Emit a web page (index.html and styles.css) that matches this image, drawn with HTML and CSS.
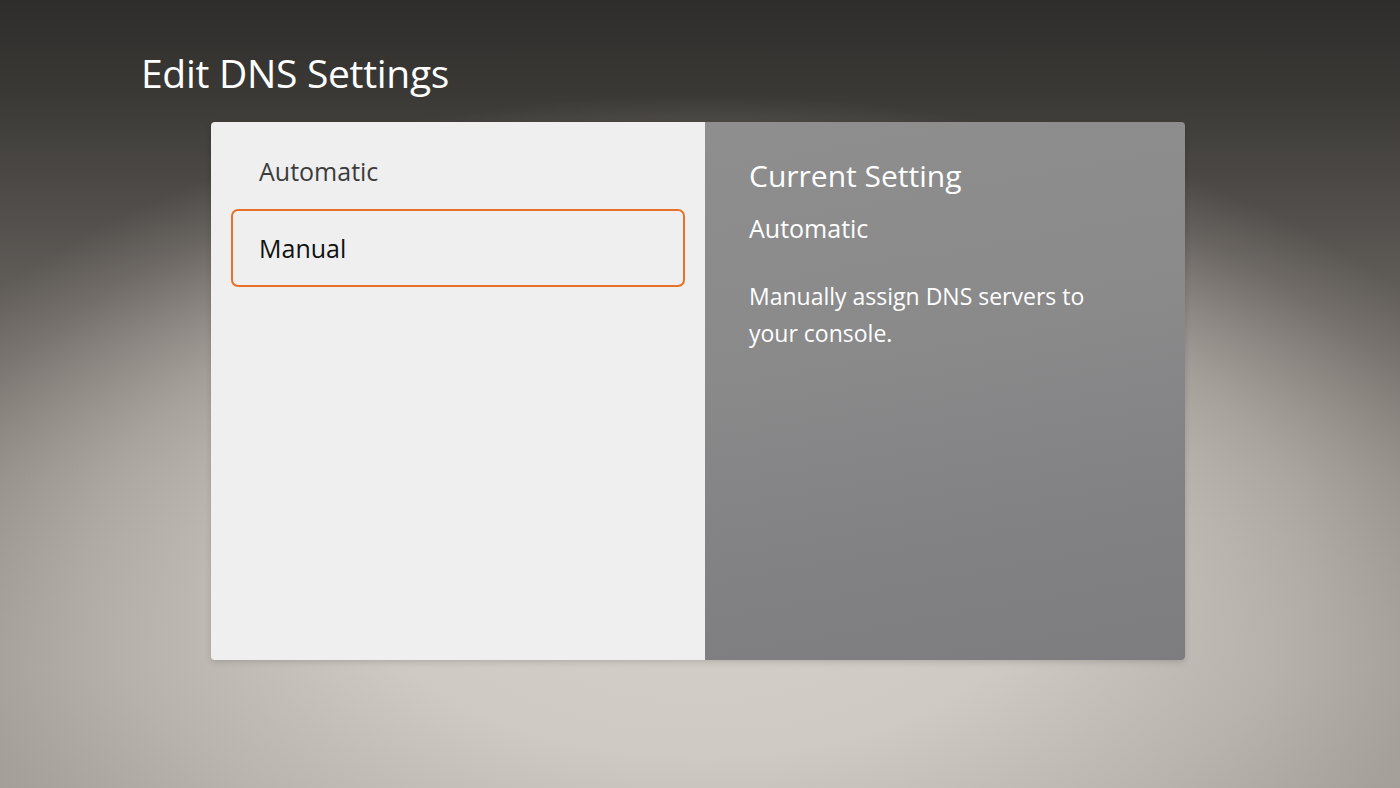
FILE: index.html
```html
<!DOCTYPE html>
<html lang="en">
<head>
    <meta charset="UTF-8">
    <meta name="viewport" content="width=device-width, initial-scale=1.0">
    <title>Edit DNS Settings</title>
    <link rel="stylesheet" href="styles.css">
</head>
<body>

    <div class="screen">
        <h1 class="page-title">Edit DNS Settings</h1>

        <div class="dns-panel">
            <div class="option-list">
                <div class="option">Automatic</div>
                <div class="option selected">Manual</div>
            </div>

            <div class="detail-pane">
                <h2>Current Setting</h2>
                <div class="current-value">Automatic</div>
                <p class="description">Manually assign DNS servers to<br>your console.</p>
            </div>
        </div>
    </div>

</body>
</html>
```

FILE: styles.css
```css
/* Dark top fading into a soft warm glow */
body {
    margin: 0;
    padding: 0;
    width: 1400px;
    height: 788px;
    overflow: hidden;
    font-family: "Open Sans", "Noto Sans", sans-serif;
    background:
        radial-gradient(ellipse 62% 60% at 50% 72%, rgba(214, 208, 202, 1) 0%, rgba(210, 204, 198, 0.95) 40%, rgba(206, 200, 194, 0.55) 70%, rgba(200, 194, 188, 0.15) 90%, rgba(200, 194, 188, 0) 100%),
        linear-gradient(180deg, #2e2d2b 0%, #3b3936 12%, #5e5a56 35%, #827d77 60%, #9a958f 85%, #a09b95 100%);
}

.screen {
    padding: 48px 0 0 141px;
}

.page-title {
    margin: 0 0 24px 0;
    color: #fff;
    font-weight: 400;
    font-size: 39px;
    line-height: 50px;
    letter-spacing: -0.3px;
}

.dns-panel {
    display: flex;
    width: 974px;
    height: 538px;
    margin-left: 70px;
    border-radius: 4px;
    overflow: hidden;
    box-shadow: 0 2px 6px rgba(0, 0, 0, 0.15);
}

.option-list {
    width: 494px;
    background-color: #efefef;
    padding: 11px 20px 0 20px;
    box-sizing: border-box;
}

.option {
    height: 76px;
    box-sizing: border-box;
    padding-left: 28px;
    display: flex;
    align-items: center;
    font-size: 25px;
    color: #3c3c3c;
}

.option.selected {
    height: 78px;
    color: #111;
    border: 2px solid #e8712a;
    border-radius: 7px;
    padding-left: 26px;
}

.detail-pane {
    flex: 1;
    padding: 36px 0 0 44px;
    color: #fff;
    background: linear-gradient(170deg, #8e8e8f 0%, #8a8a8b 40%, #818183 75%, #7d7d7f 100%);
}

.detail-pane h2 {
    margin: 0;
    font-weight: 400;
    font-size: 30px;
    line-height: 36px;
}

.current-value {
    margin-top: 17px;
    font-size: 25px;
    line-height: 34px;
}

.description {
    margin: 33px 0 0 0;
    font-size: 23px;
    line-height: 37px;
}
```
